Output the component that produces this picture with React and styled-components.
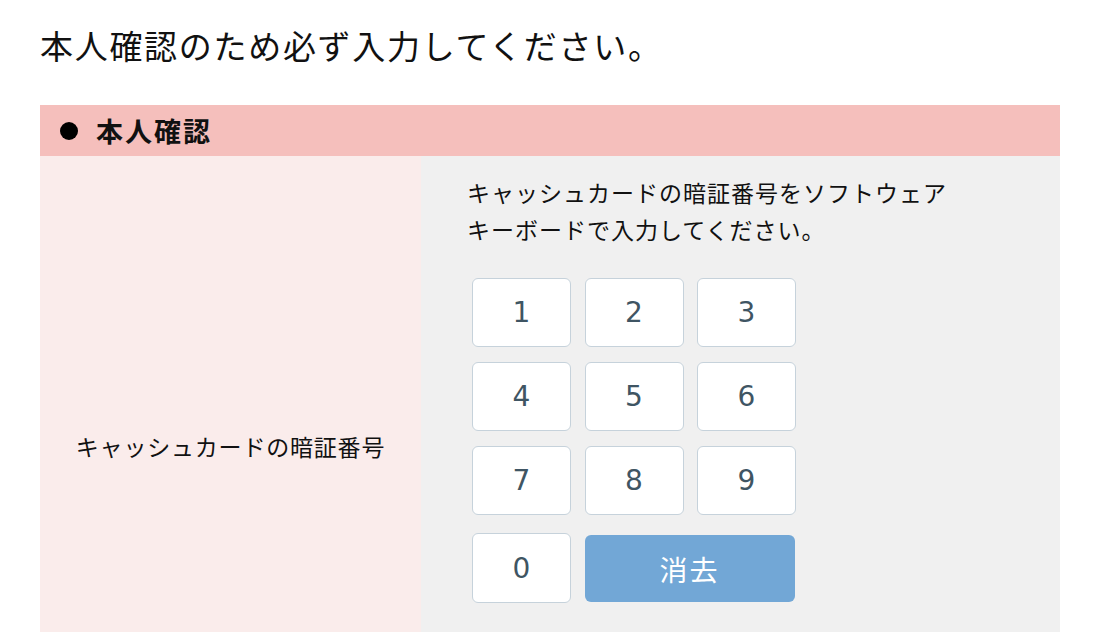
import React from "react";
import styled, { createGlobalStyle } from "styled-components";

const GlobalStyle = createGlobalStyle`
  body {
    margin: 0;
    background: #ffffff;
    font-family: "Noto Sans CJK JP", "Noto Sans", sans-serif;
    color: #111;
  }
`;

const Page = styled.main`
  width: 1020px;
  padding: 21px 0 0 40px;
`;

const Title = styled.h1`
  margin: 0 0 36px;
  font-size: 33px;
  font-weight: 400;
  letter-spacing: 1.7px;
  line-height: 48px;
`;

const SectionHead = styled.h2`
  display: flex;
  align-items: center;
  gap: 18px;
  margin: 0;
  height: 51px;
  padding-left: 20px;
  background: #f5bfbc;
  font-size: 27px;
  font-weight: 700;
  letter-spacing: 2px;
  .dot {
    width: 18px;
    height: 18px;
    border-radius: 50%;
    background: #000;
  }
`;

const Row = styled.div`
  display: grid;
  grid-template-columns: 381px 1fr;
  min-height: 580px;
`;

const Label = styled.div`
  display: flex;
  align-items: center;
  justify-content: center;
  background: #faeceb;
  font-size: 23px;
  letter-spacing: 0.8px;
`;

const Field = styled.div`
  background: #f0f0f0;
  padding: 18px 0 0 46px;
`;

const Hint = styled.p`
  margin: 0 0 30px;
  font-size: 23px;
  letter-spacing: 1px;
  line-height: 37px;
`;

const Pad = styled.div`
  display: grid;
  grid-template-columns: repeat(3, 99px);
  grid-template-rows: repeat(3, 69px) 73px;
  column-gap: 13.5px;
  row-gap: 15px;
  margin-left: 5px;
`;

const Key = styled.button`
  border: 1px solid #c6d2db;
  border-radius: 6px;
  background: #fff;
  color: #3f5563;
  font-family: "DejaVu Sans", sans-serif;
  font-size: 28px;
  cursor: pointer;
  ${(p) => p.$last && "align-self: start; height: 70px; margin-top: 3px;"}
`;

const Clear = styled.button`
  grid-column: span 2;
  align-self: start;
  height: 67px;
  width: 210px;
  margin-top: 5px;
  border: none;
  border-radius: 6px;
  background: #72a7d6;
  color: #fff;
  font-family: "Noto Sans CJK JP", sans-serif;
  font-size: 28px;
  letter-spacing: 2px;
  cursor: pointer;
`;

export default function App() {
  return (
    <>
      <GlobalStyle />
      <Page>
        <Title>本人確認のため必ず入力してください。</Title>
        <SectionHead>
          <span className="dot" />
          本人確認
        </SectionHead>
        <Row>
          <Label>キャッシュカードの暗証番号</Label>
          <Field>
            <Hint>
              キャッシュカードの暗証番号をソフトウェア
              <br />
              キーボードで入力してください。
            </Hint>
            <Pad>
              {["1", "2", "3", "4", "5", "6", "7", "8", "9"].map((n) => (
                <Key key={n}>{n}</Key>
              ))}
              <Key $last>0</Key>
              <Clear>消去</Clear>
            </Pad>
          </Field>
        </Row>
      </Page>
    </>
  );
}
